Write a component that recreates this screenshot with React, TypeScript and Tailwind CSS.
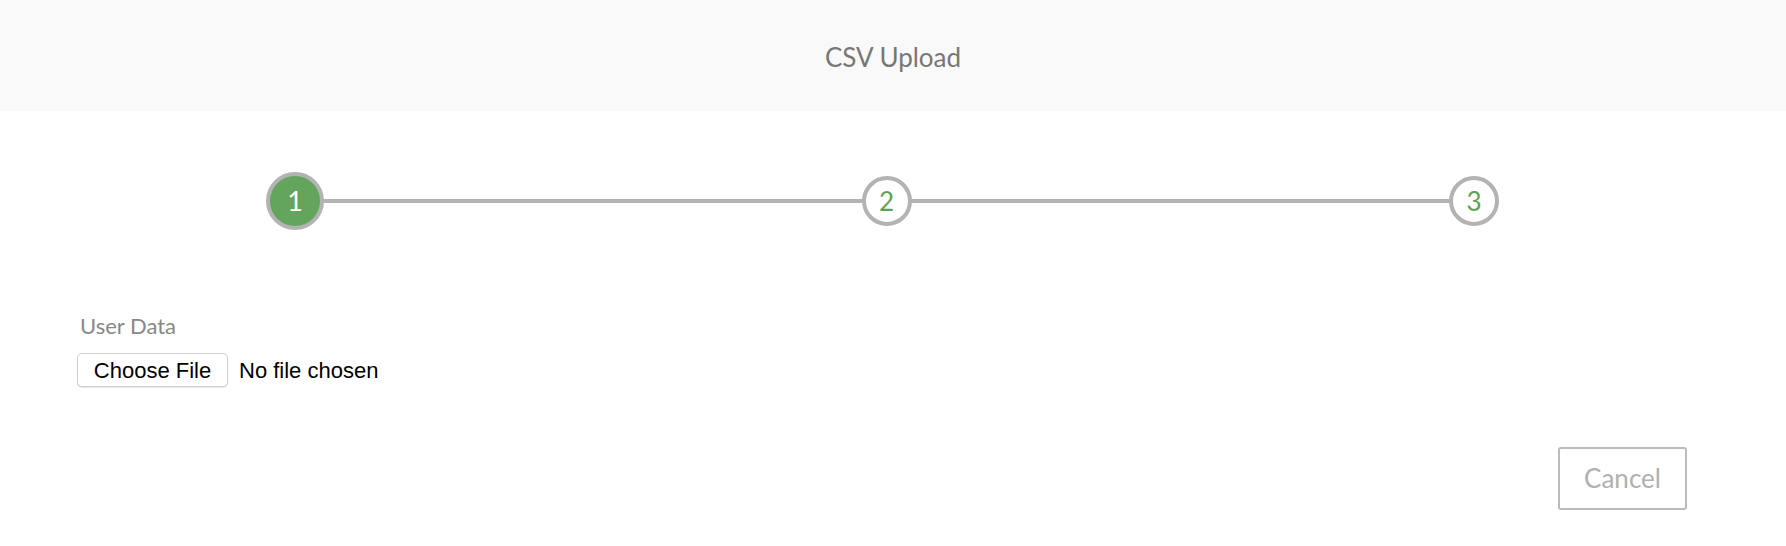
import React from 'react';

const steps = [1, 2, 3];

function Stepper({ current }: { current: number }) {
  return (
    <div className="relative ml-[266px] flex w-[1233px] items-center justify-between">
      <div className="absolute left-[40px] right-[40px] top-1/2 h-[4px] -translate-y-1/2 bg-[#b3b3b3]" />
      {steps.map((n) =>
        n === current ? (
          <div
            key={n}
            className="relative z-10 flex h-[58px] w-[58px] items-center justify-center rounded-full border-[4px] border-[#b3b3b3] bg-[#64a55e] text-[27px] text-white"
          >
            {n}
          </div>
        ) : (
          <div
            key={n}
            className="relative z-10 flex h-[50px] w-[50px] items-center justify-center rounded-full border-[4px] border-[#b3b3b3] bg-white text-[26px] text-[#5aa454]"
          >
            {n}
          </div>
        )
      )}
    </div>
  );
}

export default function App() {
  return (
    <div className="min-h-[546px] bg-white font-['Lato',sans-serif]">
      <header className="flex h-[111px] items-center justify-center bg-[#f9f9f9] pt-[3px]">
        <h1 className="text-[26px] font-normal text-[#777777]">CSV Upload</h1>
      </header>

      <div className="pt-[61px]">
        <Stepper current={1} />
      </div>

      <div className="mt-[82px] pl-[80px]">
        <label className="block text-[22px] leading-[28px] text-[#888888]">User Data</label>
        <div className="-ml-[3px] mt-[13px] flex items-center gap-[11px] font-['Liberation_Sans',Arial,sans-serif] text-[22px] text-black">
          <button className="h-[34px] w-[151px] rounded-[5px] border border-[#cfcfcf] bg-white shadow-[0_1px_1px_rgba(0,0,0,0.1)]">
            Choose File
          </button>
          <span>No file chosen</span>
        </div>
      </div>

      <div className="mt-[60px] flex justify-end pr-[99px]">
        <button className="h-[63px] w-[129px] rounded-[3px] border-2 border-[#bbbbbb] bg-white text-[26px] text-[#b0b0b0]">
          Cancel
        </button>
      </div>
    </div>
  );
}
